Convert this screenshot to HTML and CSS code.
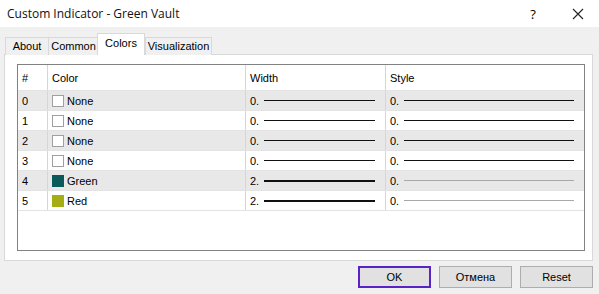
FILE: index.html
```html
<!DOCTYPE html>
<html>
   <head>
      <meta charset="UTF-8">
      <title>Custom Indicator - Green Vault</title>
      <link rel="stylesheet" href="styles.css">
   </head>
   <body>
      <div class="window">
         <div class="title-bar">
            <span class="title-text">Custom Indicator - Green Vault</span>
            <span class="help-btn">?</span>
            <span class="close-btn">
               <svg width="12" height="12" viewBox="0 0 12 12"><path d="M1 1 L11 11 M11 1 L1 11" stroke="#222" stroke-width="1.1" fill="none"/></svg>
            </span>
         </div>
         <div class="tabs">
            <div class="tab tab-about">About</div>
            <div class="tab tab-common">Common</div>
            <div class="tab tab-active">Colors</div>
            <div class="tab tab-vis">Visualization</div>
         </div>
         <div class="panel">
            <div class="list">
               <div class="row head-row">
                  <div class="cell">#</div>
                  <div class="cell">Color</div>
                  <div class="cell">Width</div>
                  <div class="cell">Style</div>
               </div>
               <div class="row shaded">
                  <div class="cell">0</div>
                  <div class="cell"><span class="swatch"></span>None</div>
                  <div class="cell">0.<span class="line"></span></div>
                  <div class="cell">0.<span class="line"></span></div>
               </div>
               <div class="row">
                  <div class="cell">1</div>
                  <div class="cell"><span class="swatch"></span>None</div>
                  <div class="cell">0.<span class="line"></span></div>
                  <div class="cell">0.<span class="line"></span></div>
               </div>
               <div class="row shaded">
                  <div class="cell">2</div>
                  <div class="cell"><span class="swatch"></span>None</div>
                  <div class="cell">0.<span class="line"></span></div>
                  <div class="cell">0.<span class="line"></span></div>
               </div>
               <div class="row">
                  <div class="cell">3</div>
                  <div class="cell"><span class="swatch"></span>None</div>
                  <div class="cell">0.<span class="line"></span></div>
                  <div class="cell">0.<span class="line"></span></div>
               </div>
               <div class="row shaded">
                  <div class="cell">4</div>
                  <div class="cell"><span class="swatch swatch-green"></span>Green</div>
                  <div class="cell">2.<span class="line line-thick"></span></div>
                  <div class="cell">0.<span class="line line-faint"></span></div>
               </div>
               <div class="row">
                  <div class="cell">5</div>
                  <div class="cell"><span class="swatch swatch-red"></span>Red</div>
                  <div class="cell">2.<span class="line line-thick"></span></div>
                  <div class="cell">0.<span class="line line-faint"></span></div>
               </div>
            </div>
         </div>
         <div class="button-row">
            <button class="dlg-button ok-button">OK</button>
            <button class="dlg-button">Отмена</button>
            <button class="dlg-button">Reset</button>
         </div>
      </div>
   </body>
</html>
```
FILE: styles.css
```css
body {
   margin: 0;
   background-color: #f0f0f0;
   font-family: "Liberation Sans", Arial, sans-serif;
   font-size: 11px;
   color: #000;
}
.window {
   width: 599px;
   height: 294px;
   overflow: hidden;
}
.title-bar {
   height: 27px;
   background-color: white;
   display: flex;
   align-items: center;
}
.title-text {
   font-family: "Open Sans", sans-serif;
   font-size: 12px;
   padding-left: 7px;
   flex: 1;
   color: #111;
}
.help-btn {
   font-family: "Open Sans", sans-serif;
   font-size: 13px;
   width: 46px;
   text-align: center;
   margin-right: 1px;
}
.close-btn {
   width: 42px;
   display: flex;
   justify-content: center;
   align-items: center;
}
.tabs {
   display: flex;
   align-items: flex-end;
   margin-top: 7px;
   padding-left: 5px;
   height: 21px;
   position: relative;
   z-index: 1;
}
.tab {
   height: 17px;
   line-height: 17px;
   text-align: center;
   border: 1px solid #d9d9d9;
   border-bottom: none;
   margin-right: -1px;
   background-color: #f0f0f0;
   font-size: 11px;
   box-sizing: content-box;
}
.tab-about {
   width: 42px;
}
.tab-common {
   width: 49px;
}
.tab-vis {
   width: 65px;
}
.tab-active {
   width: 46px;
   height: 21px;
   line-height: 19px;
   background-color: white;
   margin: 0 0 0 -1px;
}
.panel {
   margin: -1px 6px 0 4px;
   height: 196px;
   border: 1px solid #d9d9d9;
   background-color: white;
   padding: 9px 0 0 12px;
}
.list {
   width: 566px;
   height: 185px;
   border: 1px solid #828282;
}
.row {
   display: grid;
   grid-template-columns: 30px 198px 140px 198px;
   height: 20px;
   border-bottom: 1px solid #e3e3e3;
   box-sizing: border-box;
}
.head-row {
   height: 26px;
}
.shaded {
   background-color: #e8e8e8;
}
.cell {
   display: flex;
   align-items: center;
   padding-left: 4px;
   border-right: 1px solid #d6d6d6;
   white-space: nowrap;
}
.cell:last-child {
   border-right: none;
}
.swatch {
   width: 12px;
   height: 12px;
   border: 1px solid #a0a0a0;
   background-color: white;
   margin-right: 3px;
   box-sizing: border-box;
}
.swatch-green {
   background-color: #0a5a5a;
   border-color: #0a5a5a;
}
.swatch-red {
   background-color: #a5ad14;
   border-color: #a5ad14;
}
.line {
   flex: 1;
   height: 1px;
   background-color: #111;
   margin: 0 10px 0 5px;
}
.line-thick {
   height: 2px;
}
.line-faint {
   background-color: #a8a8a8;
}
.button-row {
   display: flex;
   justify-content: flex-end;
   gap: 8px;
   padding: 5px 6px 0 0;
}
.dlg-button {
   width: 73px;
   height: 22px;
   border: 1px solid #adadad;
   background-color: #e1e1e1;
   font-family: "Liberation Sans", Arial, sans-serif;
   font-size: 11px;
   padding: 0;
   color: #000;
}
.ok-button {
   border: 2px solid #5a23c8;
}
```
